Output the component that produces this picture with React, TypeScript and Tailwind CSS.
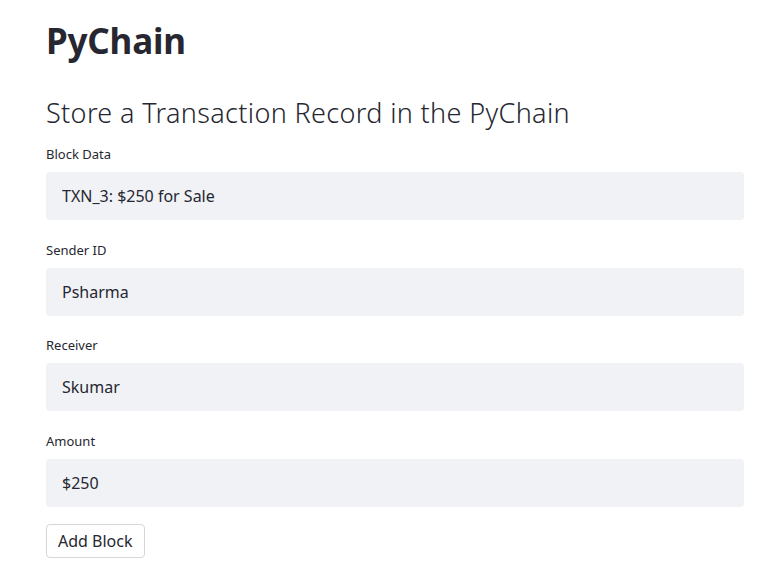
import React from 'react';

const fields = [
  { label: 'Block Data', value: 'TXN_3: $250 for Sale' },
  { label: 'Sender ID', value: 'Psharma' },
  { label: 'Receiver', value: 'Skumar' },
  { label: 'Amount', value: '$250' },
];

function TextField({ label, value }: { label: string; value: string }) {
  return (
    <div className="mt-[15.6px] first:mt-[17px]">
      <div className="h-4 text-[13px] leading-4 text-[#262730]">{label}</div>
      <input
        readOnly
        value={value}
        className="mt-[10px] block h-12 w-full rounded-[4px] bg-[#f0f2f6] px-4 text-[16px] text-[#262730] outline-none"
      />
      <div className="h-[6px]" />
    </div>
  );
}

export default function App() {
  return (
    <div
      className="min-h-screen w-full bg-white text-[#262730]"
      style={{ fontFamily: '"Noto Sans", sans-serif' }}
    >
      <div className="w-[698px] ml-[46px] pt-[19px] pb-6">
        <h1 className="text-[35px] font-bold leading-[44px] tracking-[-0.2px]">PyChain</h1>
        <h2 className="mt-[34px] text-[27px] font-light leading-[32px] tracking-[0.35px]">
          Store a Transaction Record in the PyChain
        </h2>
        <div>
          {fields.map((f) => (
            <TextField key={f.label} label={f.label} value={f.value} />
          ))}
        </div>
        <button className="mt-[11px] h-[34px] rounded-[4px] border border-[#d6d6d9] bg-white px-[11px] text-[16px] text-[#262730]">
          Add Block
        </button>
      </div>
    </div>
  );
}
